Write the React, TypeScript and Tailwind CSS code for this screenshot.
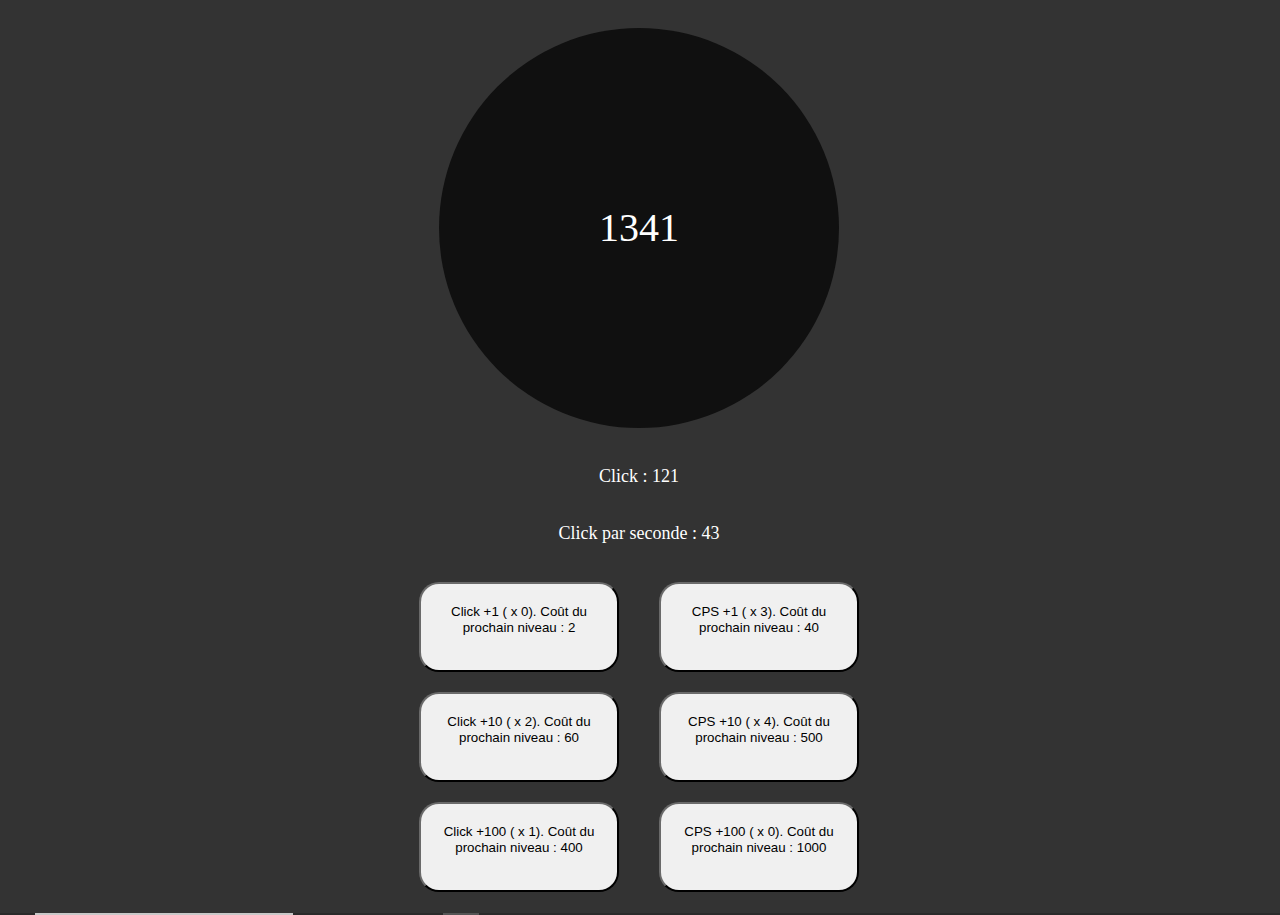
import React from "react";

const buttons = [
  "Click +1 ( x 0). Coût du prochain niveau : 2",
  "CPS +1 ( x 3). Coût du prochain niveau : 40",
  "Click +10 ( x 2). Coût du prochain niveau : 60",
  "CPS +10 ( x 4). Coût du prochain niveau : 500",
  "Click +100 ( x 1). Coût du prochain niveau : 400",
  "CPS +100 ( x 0). Coût du prochain niveau : 1000",
];

export default function App() {
  return (
    <div className="h-[915px] w-full bg-[#333333] flex flex-col items-center overflow-hidden pr-[2px]">
      <div className="mt-[28px] w-[400px] h-[400px] shrink-0 rounded-full bg-[#101010] flex items-center justify-center">
        <span
          className="text-white text-[40px] leading-none"
          style={{ fontFamily: '"Liberation Serif", "Times New Roman", serif' }}
        >
          1341
        </span>
      </div>
      <p
        className="mt-[38px] text-white text-[18px] leading-[21px]"
        style={{ fontFamily: '"Liberation Serif", "Times New Roman", serif' }}
      >
        Click : 121
      </p>
      <p
        className="mt-[36px] text-white text-[18px] leading-[21px]"
        style={{ fontFamily: '"Liberation Serif", "Times New Roman", serif' }}
      >
        Click par seconde : 43
      </p>
      <div className="mt-[38px] grid grid-cols-[200px_200px] gap-x-[40px] gap-y-[20px] shrink-0">
        {buttons.map((b) => (
          <button
            key={b}
            className="h-[90px] w-[200px] rounded-[20px] bg-[#f0f0f0] border-2 border-t-[#6a6a6a] border-l-[#6a6a6a] border-b-black border-r-black px-[6px] pt-[20px] flex items-start justify-center text-center text-black text-[13.33px] leading-[16px]"
            style={{ fontFamily: '"Liberation Sans", Arial, sans-serif' }}
          >
            <span className="w-[170px]">{b}</span>
          </button>
        ))}
      </div>
      <div className="mt-[21px] w-[calc(100%+2px)] mr-[-2px] h-[20px] shrink-0 bg-[#2a2a2a] flex items-start">
        <div className="ml-[35px] w-[258px] h-[20px] bg-[#c8c8c8]" />
        <div className="ml-[150px] w-[36px] h-[20px] bg-[#555555]" />
      </div>
    </div>
  );
}
